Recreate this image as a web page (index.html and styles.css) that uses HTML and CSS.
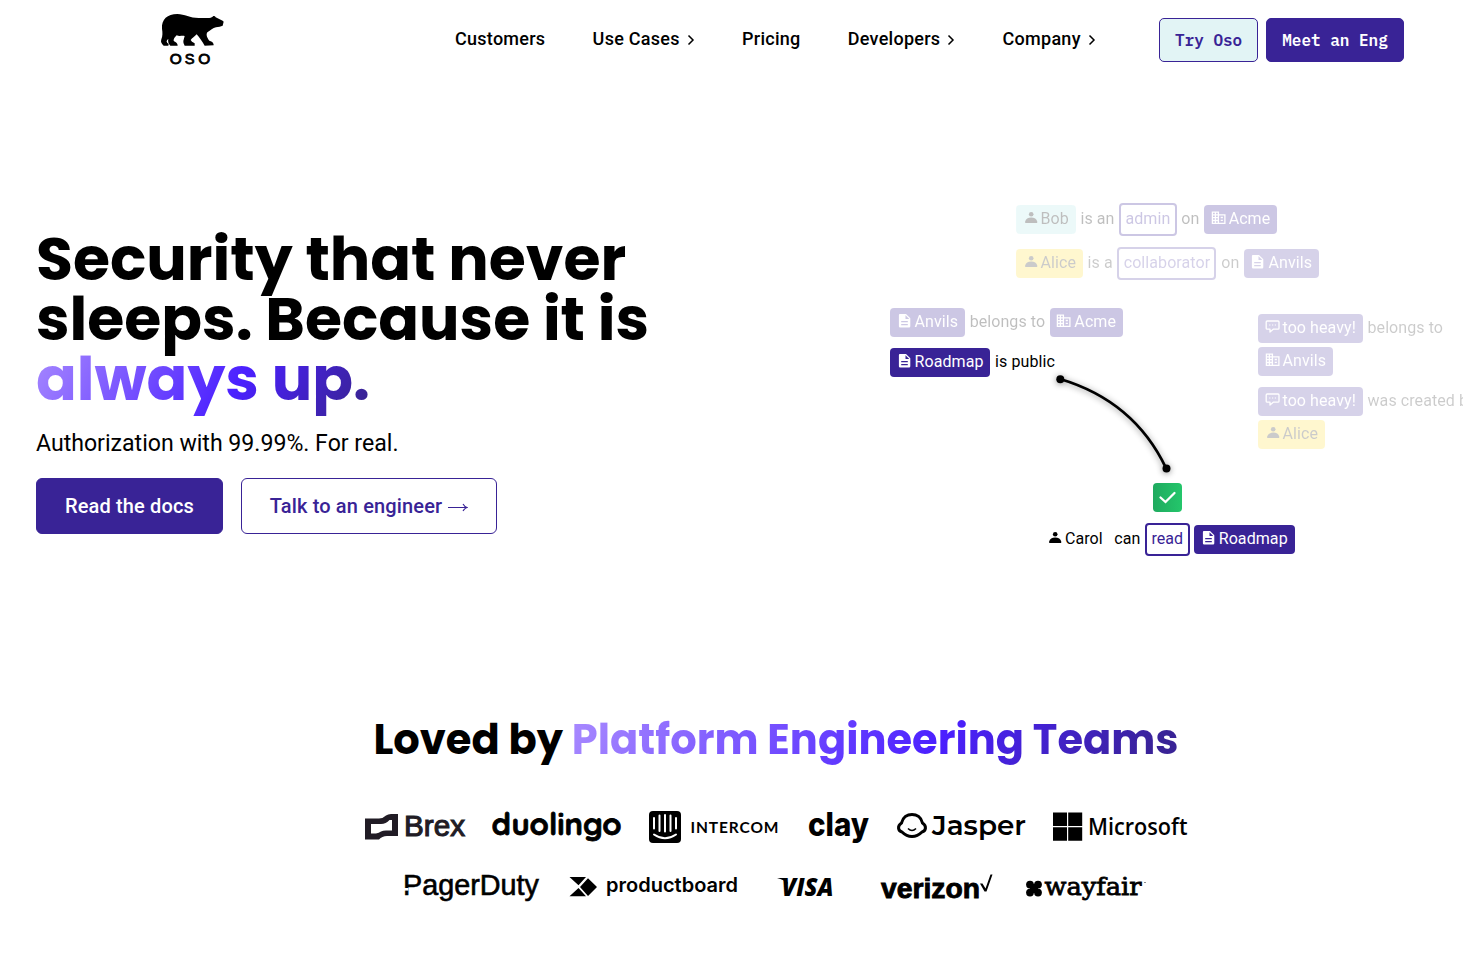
FILE: index.html
```html
<!DOCTYPE html>
<html lang="en">
<head>
<meta charset="utf-8">
<title>Oso</title>
<link rel="stylesheet" href="styles.css">
</head>
<body>
<svg class="defs" width="0" height="0" aria-hidden="true">
  <symbol id="person" viewBox="0 0 16 16"><circle cx="8.200" cy="4.200" r="2.300"/><path d="M2.200 13V11.600C2.800 9 5 7.600 8.200 7.600s5.400 1.400 6 4V13z"/></symbol>
  <symbol id="doc" viewBox="0 0 16 16"><path fill-rule="evenodd" d="M2.800 1h6.200l4.300 4.300v8q0 1.200-1.200 1.200h-9q-1.200 0-1.200-1.200v-11q0-1.300.9-1.300zM8.500 2.200V6h3.800zM4.200 8h6.600v1.300H4.200zM4.200 10.900h6.600v1.300H4.200z"/></symbol>
  <symbol id="org" viewBox="0 0 16 16"><path fill="none" stroke="currentColor" stroke-width="1.300" d="M1.400 2.100h6v11.200h-6zM7.400 4.800h6.500v8.500H7.400zM1.400 4.900h6M1.400 7.700h6M1.400 10.500h6M4.400 2.100v11M9.700 7.500h2.200M9.700 10.400h2.200"/></symbol>
  <symbol id="chat" viewBox="0 0 16 16"><path fill="none" stroke="currentColor" stroke-width="1.300" stroke-linejoin="round" d="M2.200 2h10.800q1 0 1 1v6.200q0 1-1 1H8.200L5 13V10.200H2.200q-1 0-1-1V3q0-1 1-1z"/><path d="M4.200 5.600h1.200v1H4.200zM7 5.600h1.200v1H7zM9.800 5.600h1.200v1H9.800z"/></symbol>
</svg>

<header class="header">
  <a class="brand">
    <svg width="66" height="54" viewBox="60 36 198 162">
      <path d="M66 86C64 58 82 42 112 42C134 42 150 54 176 54L208 54C214 53 217 52 220 48Q225 47 227 52L248 62Q253 65 250 69L248 77Q240 81 228 82C218 84 212 91 202 97C197 104 202 115 208 122Q222 126 221 136L194 137C188 126 178 112 170 103C164 110 156 114 152 120Q154 126 164 130L164 137L134 137Q129 130 130 123L134 108C126 106 118 110 110 106C104 112 100 117 101 123Q113 128 113 137L91 137C86 132 83 124 85 116C78 122 78 127 86 132L85 137L71 137C65 132 61 126 64 118C68 108 68 98 66 86Z"/>
      <text x="89" y="193" font-family="Liberation Sans" font-weight="400" font-size="44" stroke="#000" stroke-width="2.500" textLength="36" lengthAdjust="spacingAndGlyphs"><tspan>O</tspan></text>
      <text x="134" y="193" font-family="Liberation Sans" font-weight="400" font-size="44" stroke="#000" stroke-width="2.500">S</text>
      <text x="175" y="193" font-family="Liberation Sans" font-weight="400" font-size="44" stroke="#000" stroke-width="2.500" textLength="36" lengthAdjust="spacingAndGlyphs">O</text>
    </svg>
  </a>
  <nav class="nav">
    <a>Customers</a>
    <a>Use Cases <svg class="chev" viewBox="0 0 8 12"><path d="M1.500 1.500L6 6L1.500 10.500"/></svg></a>
    <a>Pricing</a>
    <a>Developers <svg class="chev" viewBox="0 0 8 12"><path d="M1.500 1.500L6 6L1.500 10.500"/></svg></a>
    <a>Company <svg class="chev" viewBox="0 0 8 12"><path d="M1.500 1.500L6 6L1.500 10.500"/></svg></a>
  </nav>
  <div class="cta">
    <a class="btn-mono light">Try Oso</a>
    <a class="btn-mono">Meet an Eng</a>
  </div>
</header>

<main>
<section class="hero">
  <div class="copy">
    <h1>Security that never<br>sleeps. Because it is<br><span class="grad">always up.</span></h1>
    <p class="sub">Authorization with 99.99%. For real.</p>
    <div class="actions">
      <a class="btn">Read the docs</a>
      <a class="btn outline">Talk to an engineer <svg width="20" height="12" viewBox="0 0 20 12"><path d="M0 6.500H19M15 3Q16.500 5.700 19 6.500Q16.500 7.300 15 10"/></svg></a>
    </div>
  </div>
  <div class="canvas">
    <div class="fact n1"><span class="chip teal"><svg><use href="#person"/></svg>Bob</span><span>is an</span><span class="chip role">admin</span><span>on</span><span class="chip"><svg><use href="#org"/></svg>Acme</span></div>
    <div class="fact n2"><span class="chip gold"><svg><use href="#person"/></svg>Alice</span><span>is a</span><span class="chip role">collaborator</span><span>on</span><span class="chip"><svg><use href="#doc"/></svg>Anvils</span></div>
    <div class="fact n3"><span class="chip"><svg><use href="#doc"/></svg>Anvils</span><span>belongs to</span><span class="chip"><svg><use href="#org"/></svg>Acme</span></div>
    <div class="fact n4"><span class="chip"><svg><use href="#doc"/></svg>Roadmap</span><span>is public</span></div>
    <div class="fact n5"><span class="chip"><svg><use href="#chat"/></svg>too heavy!</span><span>belongs to</span></div>
    <div class="fact n6"><span class="chip"><svg><use href="#org"/></svg>Anvils</span></div>
    <div class="fact n7"><span class="chip"><svg><use href="#chat"/></svg>too heavy!</span><span>was created by</span></div>
    <div class="fact n8"><span class="chip gold"><svg><use href="#person"/></svg>Alice</span></div>
    <svg class="wire" width="130" height="110" viewBox="1050 369 130 110"><path d="M1060 379Q1134 401 1166 468" fill="none" stroke="#000" stroke-width="2.800"/><circle cx="1060.300" cy="379.300" r="4"/><circle cx="1166.500" cy="468.500" r="4"/></svg>
    <div class="check"><svg width="29" height="29" viewBox="0 0 29 29"><path d="M7.500 14.500L12.500 19L21.500 10" fill="none" stroke="#fff" stroke-width="2.300" stroke-linecap="round"/></svg></div>
    <div class="fact n9"><span class="chip plain"><svg><use href="#person"/></svg>Carol</span><span>can</span><span class="chip role">read</span><span class="chip"><svg><use href="#doc"/></svg>Roadmap</span></div>
  </div>
</section>

<section class="loved">
  <h2>Loved by <span class="grad">Platform Engineering Teams</span></h2>
  <div class="logos">
    <svg width="100" height="40" viewBox="365 807 100 40"><path fill="#211c25" fill-rule="evenodd" d="M365 818.500H379Q383 818.500 386 815.500Q388 814 391 814H398V836H387Q382 836 379 839.500H365zM371 824V833.500H376Q379 833 381 831.500Q383 830.500 386 830.500H392V820H389.500Q386 824 381 824z"/><text x="404" y="836" fill="#211c25" stroke="#211c25" stroke-width="1.100" font-family="Liberation Sans" font-size="30" textLength="61" lengthAdjust="spacingAndGlyphs">Brex</text></svg>
    <svg width="128" height="40" viewBox="493 807 128 40"><text x="491.500" y="834.500" font-family="Quicksand, Comfortaa, Poppins" font-weight="700" font-size="31" textLength="130" lengthAdjust="spacingAndGlyphs" stroke="#000" stroke-width=".8">duolingo</text></svg>
    <svg width="132" height="40" viewBox="649 807 132 40"><rect x="649" y="811" width="32" height="32" rx="4"/><path d="M654 818V828.500M659.500 815.500V831M665 815V831.500M670.500 815.500V831M676 818V828.500M654 834.500Q665 842 676 834.500" fill="none" stroke="#fff" stroke-width="2" stroke-linecap="round"/><text x="690.500" y="832.500" font-family="Lato" font-weight="700" font-size="15.500" textLength="88">INTERCOM</text></svg>
    <svg width="60" height="40" viewBox="809 807 60 40"><text x="808" y="836" font-family="Inter" font-weight="800" font-size="32" textLength="61" lengthAdjust="spacingAndGlyphs">clay</text></svg>
    <svg width="128" height="40" viewBox="897 807 128 40"><g fill="none" stroke="#000" stroke-width="3"><path d="M901.500 823C904 811.500 920 811.500 922.500 823C927 826 926 831 922 832C916 838 908 838 902 832C898 831 897 826 901.500 823Z"/><path d="M908 828.500Q912 832.500 916 828.500" stroke-width="1.600"/></g><text x="932" y="835" font-family="Montserrat, Inter" font-weight="600" font-size="27" textLength="94" lengthAdjust="spacingAndGlyphs">Jasper</text></svg>
    <svg width="134" height="40" viewBox="1053 807 134 40"><path d="M1053 812.500h14v13.500h-14zM1068.200 812.500h14v13.500h-14zM1053 827.200h14v13.500h-14zM1068.200 827.200h14v13.500h-14z"/><text x="1088" y="835" font-family="Open Sans" font-weight="600" font-size="23.500" textLength="99.500" lengthAdjust="spacingAndGlyphs">Microsoft</text></svg>
  </div>
  <div class="logos second">
    <svg width="136" height="40" viewBox="405 867 136 40"><text x="403" y="894.500" font-family="Liberation Sans" font-size="29" textLength="136" lengthAdjust="spacingAndGlyphs" stroke="#000" stroke-width=".6">PagerDuty</text><path fill="#fff" d="M402 888h6.500v2.600h-6.500z"/></svg>
    <svg width="168" height="40" viewBox="569 867 168 40"><path d="M569.500 877H586L578.500 885.300zM569.500 896.300H586L578.500 888zM588 878.200L597 887L588 896L580 887z"/><text x="606" y="892" font-family="Inter" font-weight="600" font-size="20" textLength="132" lengthAdjust="spacingAndGlyphs">productboard</text></svg>
    <svg width="80" height="40" viewBox="765 867 80 40"><text x="781.500" y="895.500" font-family="Open Sans" font-weight="800" font-style="italic" font-size="24" textLength="52" lengthAdjust="spacingAndGlyphs">VISA</text><path d="M777 878H786L788 884Q784 879.500 777 878z"/></svg>
    <svg width="125" height="40" viewBox="873 867 125 40"><text x="881" y="897.500" font-family="Liberation Sans" font-weight="700" font-size="28.500" textLength="99" lengthAdjust="spacingAndGlyphs" stroke="#000" stroke-width=".9">verizon</text><path d="M980 883.500H982.500L985.500 888.500L990.500 874.500H992.500L986.500 891.500H984.500z"/></svg>
    <svg width="120" height="40" viewBox="1026 867 120 40"><g><circle cx="1030" cy="884.600" r="3.900"/><circle cx="1038" cy="884.600" r="3.900"/><circle cx="1030" cy="892.600" r="3.900"/><circle cx="1038" cy="892.600" r="3.900"/><path d="M1030 884h8v9h-8z"/></g><text x="1044.500" y="895" font-family="DejaVu Serif" stroke="#000" stroke-width=".8" font-size="25" textLength="97" lengthAdjust="spacingAndGlyphs">wayfair</text><circle cx="1145" cy="882.500" r=".6"/></svg>
  </div>
</section>
</main>
</body>
</html>
```
FILE: styles.css
```css
* { box-sizing: border-box; }
body { margin: 0; background: #fff; color: #000; font-family: Roboto, sans-serif; overflow: hidden; }
.defs { position: absolute; }
.header { display: flex; height: 80px; padding-left: 160px; }
.brand { width: 66px; padding-top: 12px; margin-right: 229px; }
.brand svg { display: block; }
.nav { display: flex; gap: 47.200px; width: 704px; height: 77px; align-items: center; font-size: 18px; font-weight: 500; letter-spacing: .27px; white-space: nowrap; }
.nav a { display: flex; align-items: center; gap: 7px; }
.chev { width: 8px; height: 12px; margin-top: 2px; fill: none; stroke: #000; stroke-width: 1.5; }
.cta { display: flex; gap: 8px; padding-top: 18px; }
.btn-mono { height: 44px; padding: 0 15px; border: 1px solid #392396; border-radius: 5px; background: #392396; color: #fff; font: 600 16px/43px "IBM Plex Mono", "Liberation Mono", monospace; white-space: nowrap; }
.btn-mono.light { background: #e2f4f5; color: #392396; }

.hero { display: flex; height: 600px; }
.copy { width: 850px; padding: 149px 0 0 36px; }
h1, h2 { font-family: Poppins, Inter, sans-serif; font-weight: 700; margin: 0; white-space: nowrap; }
h1 { font-size: 60.100px; line-height: 60px; }
.grad { background: linear-gradient(120deg, #a98bff, #4b20ff 60%, #392396 95%); -webkit-background-clip: text; background-clip: text; color: transparent; }
.sub { margin: 20px 0 0; font-size: 23.100px; line-height: 30px; }
.actions { display: flex; gap: 18px; margin-top: 19px; }
.btn { display: flex; align-items: center; justify-content: center; gap: 6px; width: 187px; height: 56px; border: 1px solid #392396; border-radius: 6px; background: #392396; color: #fff; font-size: 20px; font-weight: 500; letter-spacing: .15px; }
.btn.outline { width: 256px; background: #fff; color: #392396; }
.btn svg { margin-top: 2px; fill: none; stroke: currentColor; stroke-width: 1.1; }

.canvas { position: relative; flex: 1; overflow: hidden; }
.fact { position: absolute; display: flex; align-items: center; gap: 4.700px; height: 33px; font-size: 16px; line-height: 27px; letter-spacing: .08px; white-space: nowrap; }
.fact > span { padding-bottom: 2px; }
.fact > .chip { display: flex; align-items: center; gap: 2px; height: 29px; padding: 0 6.900px 2px 6.500px; border-radius: 4px; background: #392396; color: #fff; }
.chip svg { width: 16px; height: 16px; margin-top: -2px; fill: currentColor; }
.fact > .role { height: 33px; padding: 0 4.300px 2px; border: 2px solid #392396; background: #fff; color: #392396; }
.fact > .teal { background: #b7ebeb; color: #000; }
.fact > .gold { background: #ffd814; color: #000; }
.fact > .plain { background: none; color: #000; }
.n1 { left: 166px; top: 123px; opacity: .25; }
.n2 { left: 166px; top: 167px; opacity: .2; }
.n3 { left: 40px; top: 226px; opacity: .25; }
.n4 { left: 40px; top: 266px; }
.n5 { left: 408px; top: 232px; opacity: .2; }
.n6 { left: 408px; top: 265px; opacity: .2; }
.n7 { left: 408px; top: 305px; opacity: .2; }
.n8 { left: 408px; top: 338px; opacity: .2; }
.n9 { left: 190.400px; top: 443px; }
.wire { position: absolute; left: 200px; top: 289px; overflow: visible; filter: drop-shadow(0 1px 3px rgba(0, 0, 0, .45)); }
.check { position: absolute; left: 303px; top: 403px; width: 29px; height: 29px; border-radius: 4px; background: linear-gradient(90deg, #1faa5f, #24c66b); }

.loved { display: flex; flex-direction: column; align-items: center; padding: 30px 0 0 89px; }
h2 { font-size: 41.600px; line-height: 60px; margin-bottom: 37px; }
.logos { display: flex; gap: 28px; margin-bottom: 20px; }
.logos.second { padding-right: 1px; }
.logos svg { display: block; overflow: visible; }
```
